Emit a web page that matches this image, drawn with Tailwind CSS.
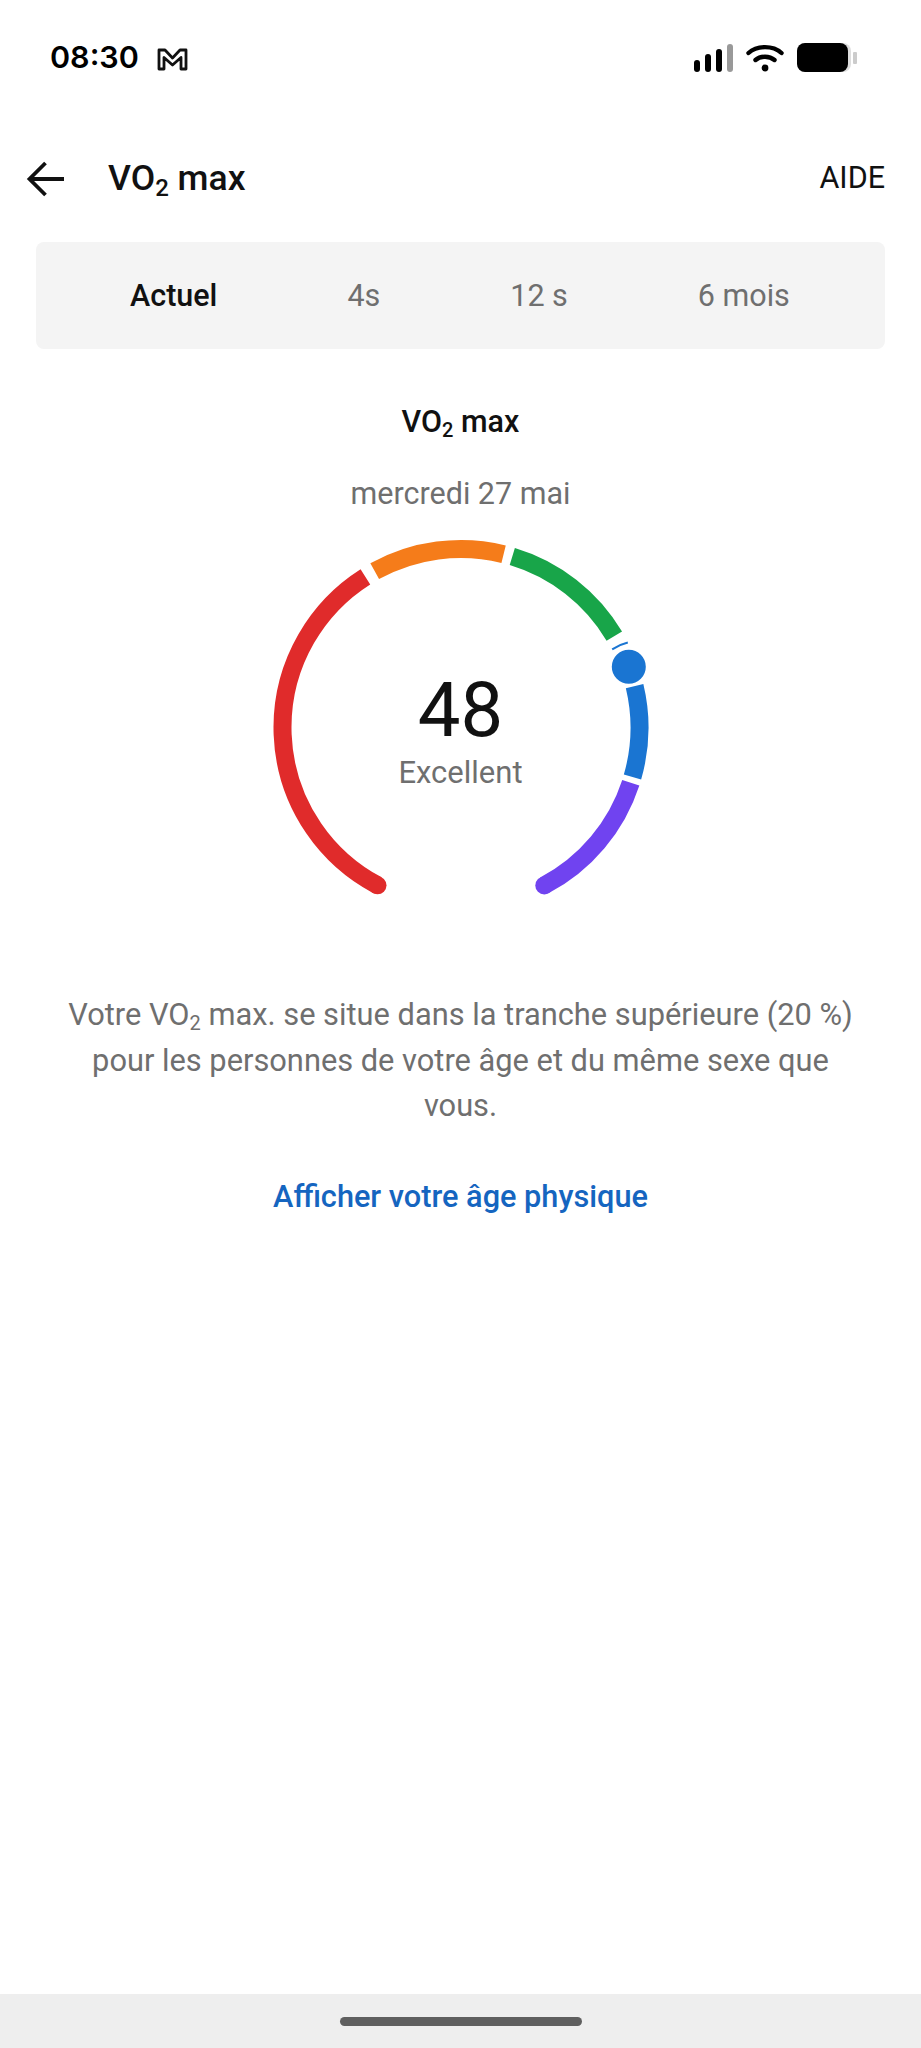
<!DOCTYPE html>
<html lang="fr">
  <head>
    <meta charset="UTF-8" />
    <meta name="viewport" content="width=device-width, initial-scale=1.0" />
    <title>VO2 max</title>
    <script src="https://cdn.jsdelivr.net/npm/@tailwindcss/browser@4"></script>
  </head>
  <body class="bg-white font-['Roboto',sans-serif] text-[#111]">
    <div class="h-[2048px] w-[921px] flex flex-col overflow-hidden">
      <!-- Status bar -->
      <div class="h-[115px] pt-[43px] pl-[50px] pr-[64px] flex items-start justify-between shrink-0">
        <div class="flex items-center h-[29px] gap-[18px]">
          <span class="font-['Inter',sans-serif] font-semibold text-[30.5px] leading-none text-black">08:30</span>
          <svg class="w-[31px] h-[24px] mt-[2px]" viewBox="0 0 31 24" fill="none" stroke="#111" stroke-width="2.8" stroke-linejoin="round">
            <path d="M2 3 L8 3 L15.5 11 L23 3 L29 3 L29 22 L24 22 L24 10.5 L15.5 18 L7 10.5 L7 22 L2 22 Z" />
          </svg>
        </div>
        <div class="flex items-start">
          <svg class="w-[39px] h-[29px]" viewBox="0 0 39 29">
            <rect x="0" y="17" width="6" height="12" rx="3" fill="#000" />
            <rect x="11" y="11" width="6" height="18" rx="3" fill="#000" />
            <rect x="22" y="6" width="6" height="23" rx="3" fill="#000" />
            <rect x="33" y="1" width="6" height="28" rx="3" fill="#999" />
          </svg>
          <svg class="ml-[13px] w-[38px] h-[29px]" viewBox="0 0 38 29" fill="none" stroke="#000" stroke-width="4.4" stroke-linecap="round">
            <path d="M2.5 10 C11 2.2 27 2.2 35.5 10" />
            <path d="M9.5 17 C14.5 12.6 23.5 12.6 28.5 17" />
            <circle cx="19" cy="25" r="3.4" fill="#000" stroke="none" />
          </svg>
          <svg class="ml-[13px] w-[60px] h-[30px]" viewBox="0 0 60 30">
            <rect x="0" y="0" width="54" height="29" rx="8" fill="#ddd" />
            <rect x="0" y="0" width="51" height="29" rx="8" fill="#000" />
            <rect x="56" y="9" width="4" height="12" rx="1" fill="#ccc" />
          </svg>
        </div>
      </div>

      <!-- Top bar -->
      <div class="h-[127px] pl-[26px] pr-[36px] flex items-center shrink-0">
        <svg class="w-[38px] h-[36px]" viewBox="0 0 38 36" fill="none" stroke="#111" stroke-width="3.8">
          <path d="M38 18 H4" />
          <path d="M19.5 2 L3.5 18 L19.5 34" />
        </svg>
        <h1 class="ml-[44px] font-medium text-[35.5px] leading-none">VO<sub class="text-[24px]">2</sub> max</h1>
        <span class="ml-auto text-[30.5px] leading-none">AIDE</span>
      </div>

      <!-- Range tabs -->
      <div class="mx-[36px] w-[849px] h-[107px] pl-[94px] bg-[#f4f4f4] rounded-[8px] flex items-center gap-[130px] text-[30.5px] text-[#6f6f6f] shrink-0">
        <span class="font-medium text-[#111] whitespace-nowrap">Actuel</span>
        <span>4s</span>
        <span>12 s</span>
        <span>6 mois</span>
      </div>

      <!-- Title and date -->
      <div class="mt-[56px] text-center text-[30.5px] leading-[34px] font-medium text-[#111]">VO<sub class="text-[20px]">2</sub> max</div>
      <div class="mt-[38px] text-center text-[30.5px] leading-[34px] text-[#6f6f6f]">mercredi 27 mai</div>

      <!-- Gauge -->
      <div class="relative mt-[20px] mx-auto w-[400px] h-[370px] shrink-0">
        <svg class="absolute inset-0" width="400" height="370" viewBox="260.5 530 400 370" fill="none" stroke-width="18">
          <path d="M377 884.3 A178.5 178.5 0 0 1 364.9 575.8" stroke="#e02b2b" />
          <path d="M374.2 570.2 A178.5 178.5 0 0 1 503.1 553.2" stroke="#f57c1a" />
          <path d="M511.8 555.5 A178.5 178.5 0 0 1 613.8 635.1" stroke="#18a549" />
          <path d="M634.1 685.1 A178.5 178.5 0 0 1 632 776" stroke="#1a75d2" />
          <path d="M630.3 781.7 A178.5 178.5 0 0 1 543.8 884.4" stroke="#7043f0" />
          <circle cx="543.8" cy="884.4" r="9" fill="#7043f0" stroke="none" />
          <circle cx="377" cy="884.3" r="9" fill="#e02b2b" stroke="none" />
          <path d="M611.7 648.3 Q619 643.5 627.3 641.5" stroke="#1a75d2" stroke-width="2" />
          <circle cx="628.3" cy="665.7" r="18" fill="#1a75d2" stroke="#fff" stroke-width="2" />
        </svg>
        <div class="absolute left-0 right-0 top-[141px] flex flex-col items-center">
          <span class="text-[76px] leading-[76px] text-[#111]">48</span>
          <span class="mt-[8px] text-[31px] leading-[34px] text-[#6f6f6f]">Excellent</span>
        </div>
      </div>

      <!-- Description -->
      <p class="mt-[91px] px-[40px] text-center text-[30.8px] leading-[45.5px] text-[#6f6f6f]">
        Votre VO<sub class="text-[20px]">2</sub> max. se situe dans la tranche supérieure (20 %)<br />pour les personnes de votre âge et du même sexe que<br />vous.
      </p>
      <a href="#" class="mt-[45px] text-center text-[30.7px] leading-[45px] font-medium text-[#1565c0]">Afficher votre âge physique</a>

      <!-- Gesture bar -->
      <div class="mt-auto h-[54px] bg-[#eeeeee] flex justify-center pt-[23px] shrink-0">
        <div class="w-[242px] h-[9px] rounded-full bg-[#5f5f5f]"></div>
      </div>
    </div>
  </body>
</html>
